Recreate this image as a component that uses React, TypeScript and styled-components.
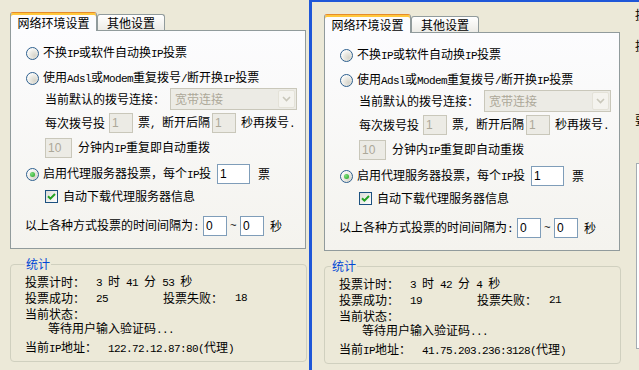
import styled, { createGlobalStyle } from "styled-components"

interface StatsData {
  hours: string
  minutes: string
  seconds: string
  success: string
  fail: string
  ip: string
}

const GlobalStyle = createGlobalStyle`
  html, body {
    margin: 0;
    padding: 0;
  }
  body {
    width: 639px;
    height: 370px;
    overflow: hidden;
    background: #ece9d8;
    font-family: "Noto Sans CJK SC", "Liberation Sans", sans-serif;
    font-size: 12px;
    color: #000;
  }
`

function Panel({ stats, legendShift }: { stats: StatsData; legendShift: number }) {
  return (
    <PanelBox>
      <TabStrip>
        <Tab $active>网络环境设置</Tab>
        <Tab>其他设置</Tab>
      </TabStrip>
      <TabBody>
        <Row>
          <Radio />
          <Text $ml={4}>
            不换<Half>IP</Half>或软件自动换<Half>IP</Half>投票
          </Text>
        </Row>
        <Row $mt={9}>
          <Radio />
          <Text $ml={4}>
            使用<Half>Adsl</Half>或<Half>Modem</Half>重复拨号<Half>/</Half>断开换<Half>IP</Half>投票
          </Text>
        </Row>
        <Row $h={22} $mt={2} $ml={19}>
          <Text>当前默认的拨号连接：</Text>
          <Combo>
            <ComboText>宽带连接</ComboText>
            <ComboButton>
              <svg width="9" height="6" viewBox="0 0 9 6">
                <path d="M1 1l3.5 3.5L8 1" fill="none" stroke="#c9c7ba" strokeWidth="1.6" />
              </svg>
            </ComboButton>
          </Combo>
        </Row>
        <Row $h={20} $mt={3} $ml={19}>
          <Text>每次拨号投</Text>
          <Field disabled readOnly value="1" $w={24} $ml={4} $mr={5} />
          <Text>
            票<Half>, </Half>断开后隔
          </Text>
          <Field disabled readOnly value="1" $w={24} $ml={2} $mr={5} />
          <Text>
            秒再拨号<Half>.</Half>
          </Text>
        </Row>
        <Row $h={20} $mt={5} $ml={19}>
          <Field disabled readOnly value="10" $w={27} $mr={6} />
          <Text>
            分钟内<Half>IP</Half>重复即自动重拨
          </Text>
        </Row>
        <Row $h={20} $mt={6}>
          <Radio $checked />
          <Text $ml={4}>
            启用代理服务器投票，每个<Half>IP</Half>投
          </Text>
          <Field readOnly value="1" $w={33} $ml={6} $mr={8} />
          <Text>票</Text>
        </Row>
        <Row $mt={4} $ml={19}>
          <Check>
            <svg width="9" height="9" viewBox="0 0 9 9">
              <path d="M1 4.2l2.4 2.4L8 2" fill="none" stroke="#21a121" strokeWidth="2" />
            </svg>
          </Check>
          <Text $ml={5}>自动下载代理服务器信息</Text>
        </Row>
        <Row $h={20} $mt={12} $ml={-1}>
          <Text>
            以上各种方式投票的时间间隔为<Half>:</Half>
          </Text>
          <Field readOnly value="0" $w={24} $ml={4} $mr={3} />
          <Half>~</Half>
          <Field readOnly value="0" $w={24} $ml={4} $mr={6} />
          <Text>秒</Text>
        </Row>
      </TabBody>

      <StatsBox>
        <Legend $shift={legendShift}>统计</Legend>
        <Row $mt={3}>
          <Cell $w={71}>投票计时：</Cell>
          <Text>
            <Half>{stats.hours} </Half>时<Half> {stats.minutes} </Half>分<Half> {stats.seconds} </Half>秒
          </Text>
        </Row>
        <Row>
          <Cell $w={71}>投票成功：</Cell>
          <Cell $w={67}>
            <Half>{stats.success}</Half>
          </Cell>
          <Cell $w={72}>投票失败：</Cell>
          <Half>{stats.fail}</Half>
        </Row>
        <Row $h={15}>
          <Text>当前状态：</Text>
        </Row>
        <Row $ml={23}>
          <Text>
            等待用户输入验证码<Half>...</Half>
          </Text>
        </Row>
        <Row $mt={3}>
          <Cell $w={83}>
            当前<Half>IP</Half>地址：
          </Cell>
          <Text>
            <Half>{stats.ip}(</Half>代理<Half>)</Half>
          </Text>
        </Row>
      </StatsBox>
    </PanelBox>
  )
}

export default function App() {
  return (
    <>
      <GlobalStyle />
      <Screen>
        <LeftPane>
          <Panel
            legendShift={0}
            stats={{ hours: "3", minutes: "41", seconds: "53", success: "25", fail: "18", ip: "122.72.12.87:80" }}
          />
        </LeftPane>
        <ActiveWindow>
          <Panel
            legendShift={-8}
            stats={{ hours: "3", minutes: "42", seconds: "4", success: "19", fail: "21", ip: "41.75.203.236:3128" }}
          />
          <SideColumn>
            <SideGlyph $mt={5}>投</SideGlyph>
            <SideGlyph $mt={15}>投</SideGlyph>
            <SideGlyph $mt={58}>要</SideGlyph>
            <SideList />
          </SideColumn>
        </ActiveWindow>
      </Screen>
    </>
  )
}

const Screen = styled.div`
  display: flex;
  width: 639px;
  height: 370px;
  overflow: hidden;
  background: #ece9d8;
`

const LeftPane = styled.div`
  flex: none;
  width: 309px;
  box-sizing: border-box;
  padding-left: 10px;
`

const ActiveWindow = styled.div`
  flex: none;
  display: flex;
  width: 400px;
  height: 370px;
  box-sizing: border-box;
  padding-left: 12px;
  border-left: 3px solid #1f57d8;
  border-top: 2px solid #1f57d8;
`

const PanelBox = styled.div`
  flex: none;
  display: flex;
  flex-direction: column;
  width: 297px;
  margin-top: 12px;
`

const TabStrip = styled.div`
  display: flex;
  align-items: flex-end;
  height: 19px;
  position: relative;
  z-index: 1;
  margin-bottom: -1px;
`

const Tab = styled.div<{ $active?: boolean }>`
  display: flex;
  align-items: center;
  justify-content: center;
  box-sizing: border-box;
  height: ${(p) => (p.$active ? "19px" : "16px")};
  margin-bottom: ${(p) => (p.$active ? "0" : "1px")};
  width: ${(p) => (p.$active ? "87px" : "68px")};
  border: 1px solid #919b9c;
  border-bottom: none;
  border-radius: 3px 3px 0 0;
  line-height: 14px;
  background: ${(p) => (p.$active ? "#fcfcfe" : "linear-gradient(#ffffff, #ecebe6)")};
  ${(p) =>
    p.$active &&
    `
    border-top: 1px solid #e68b2c;
    box-shadow: inset 0 2px 0 #ffc83c;
    padding-top: 1px;
  `}
`

const TabBody = styled.div`
  width: 296px;
  height: 219px;
  box-sizing: border-box;
  padding: 14px 0 0 15px;
  border: 1px solid #919b9c;
  background: linear-gradient(180deg, #fcfcfe, #f4f3ee);
  display: flex;
  flex-direction: column;
`

const Row = styled.div<{ $h?: number; $mt?: number; $ml?: number }>`
  display: flex;
  align-items: center;
  height: ${(p) => p.$h ?? 16}px;
  margin-top: ${(p) => p.$mt ?? 0}px;
  margin-left: ${(p) => p.$ml ?? 0}px;
  white-space: nowrap;
  line-height: 16px;
`

const Text = styled.span<{ $ml?: number }>`
  margin-left: ${(p) => p.$ml ?? 0}px;
  white-space: nowrap;
`

const Half = styled.span`
  font-family: "Liberation Mono", "DejaVu Sans Mono", monospace;
  font-size: 11px;
  letter-spacing: -0.6px;
  white-space: pre;
`

const Cell = styled.span<{ $w: number }>`
  flex: none;
  width: ${(p) => p.$w}px;
  white-space: nowrap;
`

const Radio = styled.span<{ $checked?: boolean }>`
  flex: none;
  display: flex;
  align-items: center;
  justify-content: center;
  width: 13px;
  height: 13px;
  box-sizing: border-box;
  border: 1px solid #2d5f8e;
  border-radius: 50%;
  background: radial-gradient(circle at 70% 70%, #d6d4ca 0%, #ecebe5 45%, #ffffff 80%);

  &::after {
    content: "";
    display: ${(p) => (p.$checked ? "block" : "none")};
    width: 5px;
    height: 5px;
    border-radius: 50%;
    background: radial-gradient(circle at 35% 35%, #7ee07e, #21a121);
  }
`

const Check = styled.span`
  flex: none;
  display: flex;
  align-items: center;
  justify-content: center;
  width: 13px;
  height: 13px;
  box-sizing: border-box;
  border: 1px solid #1c5180;
  background: linear-gradient(135deg, #dcdcd7, #ffffff);
`

const Field = styled.input<{ $w: number; $ml?: number; $mr?: number }>`
  flex: none;
  width: ${(p) => p.$w}px;
  height: 20px;
  box-sizing: border-box;
  margin: 0 ${(p) => p.$mr ?? 0}px 0 ${(p) => p.$ml ?? 0}px;
  padding: 0 2px;
  border: 1px solid #7f9db9;
  background: #fff;
  font-family: "Liberation Sans", sans-serif;
  font-size: 12px;
  color: #000;
  outline: none;
  border-radius: 0;

  &:disabled {
    border-color: #c9c7ba;
    background: #ecebe5;
    color: #aca899;
    -webkit-text-fill-color: #aca899;
    opacity: 1;
  }
`

const Combo = styled.div`
  flex: none;
  display: flex;
  align-items: center;
  justify-content: space-between;
  width: 127px;
  height: 22px;
  box-sizing: border-box;
  margin-left: 5px;
  padding: 1px;
  border: 1px solid #c9c7ba;
  background: #ecebe5;
`

const ComboText = styled.span`
  padding-left: 3px;
  color: #aca899;
`

const ComboButton = styled.span`
  display: flex;
  align-items: center;
  justify-content: center;
  width: 17px;
  height: 18px;
  box-sizing: border-box;
  border: 1px solid #e4e2d8;
  border-radius: 2px;
  background: #f4f3ee;
`

const StatsBox = styled.div`
  width: 297px;
  box-sizing: border-box;
  margin-top: 15px;
  padding: 0 14px 5px 14px;
  border: 1px solid #d0d0bf;
  border-radius: 4px;
  display: flex;
  flex-direction: column;
`

const Legend = styled.div<{ $shift: number }>`
  align-self: flex-start;
  margin: -8px 0 0 ${(p) => p.$shift}px;
  padding: 0 1px;
  line-height: 14px;
  background: #ece9d8;
  color: #0046d5;
`

const SideColumn = styled.div`
  flex: none;
  display: flex;
  flex-direction: column;
  width: 40px;
  margin-left: 14px;
`

const SideGlyph = styled.div<{ $mt: number }>`
  height: 16px;
  line-height: 16px;
  margin-top: ${(p) => p.$mt}px;
`

const SideList = styled.div`
  height: 184px;
  margin: 35px 0 0 1px;
  border: 1px solid #a5acb2;
  background: #fff;
`
